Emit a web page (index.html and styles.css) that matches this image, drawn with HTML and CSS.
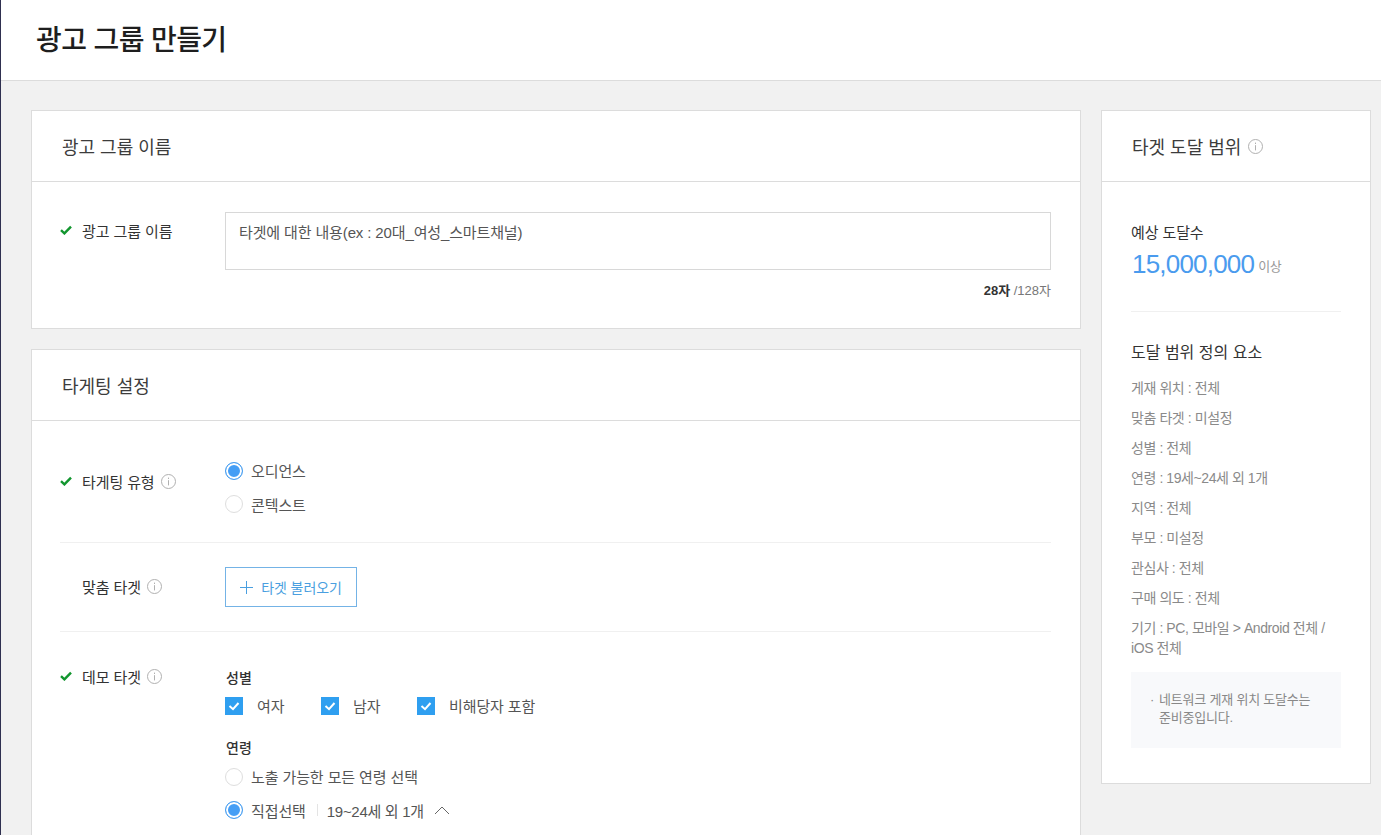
FILE: index.html
```html
<!DOCTYPE html>
<html lang="ko">
<head>
<meta charset="utf-8">
<title>광고 그룹 만들기</title>
<link rel="stylesheet" href="styles.css">
</head>
<body>
<svg class="defs" width="0" height="0">
  <symbol id="info" viewBox="0 0 15 15"><circle cx="7.5" cy="7.5" r="7" fill="none" stroke="#b0b0b0"/><path d="M7.5 3.6v1.4M7.5 6.2V11.4" stroke="#b0b0b0" fill="none"/></symbol>
  <symbol id="ok" viewBox="0 0 12 10"><path d="M1 5.2 4.4 8.4 11 1.6" fill="none" stroke="#12962f" stroke-width="2.4"/></symbol>
  <symbol id="tick" viewBox="0 0 18 18"><path d="M4.5 9 8 12.2 13.5 6" fill="none" stroke="#fff" stroke-width="2"/></symbol>
</svg>
<div class="app">
  <header class="topbar"><h1 class="page-title">광고 그룹 만들기</h1></header>
  <main class="layout">
    <div class="col-main">
      <section class="card">
        <h2 class="card-head">광고 그룹 이름</h2>
        <div class="name-body">
          <div class="row-label name-label"><svg class="ok"><use href="#ok"/></svg><span>광고 그룹 이름</span></div>
          <div class="name-field">
            <div class="textbox">타겟에 대한 내용(ex : 20대_여성_스마트채널)</div>
            <p class="counter"><b>28자</b> /128자</p>
          </div>
        </div>
      </section>
      <section class="card">
        <h2 class="card-head">타게팅 설정</h2>
        <div class="target-body">
          <div class="row row-type">
            <div class="row-label label-type"><svg class="ok"><use href="#ok"/></svg><span>타게팅 유형</span><svg class="info"><use href="#info"/></svg></div>
            <div class="stack">
              <label class="opt"><i class="radio on low"></i>오디언스</label>
              <label class="opt"><i class="radio"></i>콘텍스트</label>
            </div>
          </div>
          <div class="row row-custom">
            <div class="row-label no-ok"><span>맞춤 타겟</span><svg class="info"><use href="#info"/></svg></div>
            <button class="btn-load" type="button"><svg class="plus" viewBox="0 0 13 13"><path d="M6.5 0v13M0 6.5h13" stroke="#4a9fe0" fill="none"/></svg>타겟 불러오기</button>
          </div>
          <div class="row row-demo">
            <div class="row-label"><svg class="ok"><use href="#ok"/></svg><span>데모 타겟</span><svg class="info"><use href="#info"/></svg></div>
            <div class="demo">
              <h3 class="demo-title">성별</h3>
              <div class="checks">
                <label class="check c1"><i class="box"><svg viewBox="0 0 18 18"><use href="#tick"/></svg></i>여자</label>
                <label class="check c2"><i class="box"><svg viewBox="0 0 18 18"><use href="#tick"/></svg></i>남자</label>
                <label class="check"><i class="box"><svg viewBox="0 0 18 18"><use href="#tick"/></svg></i>비해당자 포함</label>
              </div>
              <h3 class="demo-title age">연령</h3>
              <label class="opt age-opt"><i class="radio low"></i>노출 가능한 모든 연령 선택</label>
              <div class="opt direct"><i class="radio on"></i>직접선택<span class="sep"></span><span class="range">19~24세 외 1개</span><svg class="chev" viewBox="0 0 16 9"><path d="M1 8 8 1l7 7" fill="none" stroke="#666"/></svg></div>
            </div>
          </div>
        </div>
      </section>
    </div>
    <aside class="col-side">
      <section class="card side">
        <h2 class="card-head">타겟 도달 범위<svg class="info head-info"><use href="#info"/></svg></h2>
        <div class="side-body">
          <h3 class="side-title">예상 도달수</h3>
          <p class="reach"><span class="reach-num">15,000,000</span><span class="reach-unit">이상</span></p>
          <hr class="side-rule">
          <h3 class="side-title wide">도달 범위 정의 요소</h3>
          <ul class="factors">
            <li>게재 위치 : 전체</li>
            <li>맞춤 타겟 : 미설정</li>
            <li>성별 : 전체</li>
            <li>연령 : 19세~24세 외 1개</li>
            <li>지역 : 전체</li>
            <li>부모 : 미설정</li>
            <li>관심사 : 전체</li>
            <li>구매 의도 : 전체</li>
            <li>기기 : PC, 모바일 &gt; Android 전체 / iOS 전체</li>
          </ul>
          <div class="notice"><span class="dot">·</span><span>네트워크 게재 위치 도달수는 준비중입니다.</span></div>
        </div>
      </section>
    </aside>
  </main>
</div>
</body>
</html>
```

FILE: styles.css
```css
* { box-sizing: border-box; }
html, body { margin: 0; height: 100%; overflow: hidden; }
body {
  font-family: "Liberation Sans", "Noto Sans CJK KR", sans-serif;
  font-size: 14px;
  color: #333;
  background: #f1f1f1;
}
.defs { position: absolute; }
.app { height: 835px; border-left: 1px solid #2f3050; overflow: hidden; }
.topbar {
  height: 81px;
  background: #fff;
  border-bottom: 1px solid #dcdcdc;
  padding-left: 35px;
  display: flex;
  align-items: center;
}
.page-title { margin: 0 0 4px; font-size: 28px; font-weight: 500; letter-spacing: -0.6px; color: #1e1e1e; }
.layout { display: flex; gap: 20px; padding: 29px 10px 0 30px; align-items: flex-start; }
.col-main { width: 1050px; display: flex; flex-direction: column; gap: 20px; }
.col-side { width: 270px; }
.card { background: #fff; border: 1px solid #dcdcdc; }
.card-head {
  height: 71px;
  margin: 0;
  padding-left: 30px;
  border-bottom: 1px solid #dcdcdc;
  font-size: 18px;
  font-weight: 400;
  letter-spacing: 0;
  color: #3c3c3c;
  display: flex;
  align-items: center;
}
.name-body { display: flex; padding: 30px 29px 22px 28px; height: 146px; }
.row-label { width: 165px; flex: none; display: flex; align-items: center; height: 20px; font-size: 15px; letter-spacing: -0.1px; color: #333; }
.name-label { margin-top: 8px; }
.ok { width: 12px; height: 10px; margin-right: 10px; flex: none; }
.info { width: 15px; height: 15px; margin-left: 6px; flex: none; }
.head-info { margin-left: 7px; }
.no-ok { padding-left: 22px; margin-bottom: 2px; }
.name-field { flex: 1; }
.textbox {
  height: 58px;
  border: 1px solid #d8d8d8;
  padding: 8px 13px;
  font-size: 15px;
  letter-spacing: -0.13px;
  color: #555;
}
.counter { margin: 10px 0 0; text-align: right; font-size: 13px; letter-spacing: 0; color: #777; }
.counter b { color: #333; }
.target-body { padding: 0 29px 0 28px; }
.row { display: flex; border-bottom: 1px solid #f0f0f0; }
.row:last-child { border-bottom: 0; }
.row-type { height: 122px; padding-top: 30px; }
.label-type { margin-top: 20px; height: 20px; }
.stack { display: flex; flex-direction: column; gap: 14px; margin-top: 9px; }
.opt { display: flex; align-items: center; height: 20px; font-size: 15px; color: #555; letter-spacing: -0.1px; }
.radio { width: 18px; height: 18px; border-radius: 50%; border: 1px solid #dedede; background: #fff; margin-right: 8px; flex: none; }
.radio.low { margin-top: 2px; }
.radio.on { border: 1px solid #4a9ff0; background: #459ef5; box-shadow: inset 0 0 0 2px #fff; }
.row-custom { height: 89px; align-items: center; }
.btn-load {
  width: 132px;
  height: 40px;
  border: 1px solid #74b3e6;
  background: #fff;
  color: #4a9fe0;
  font: inherit;
  font-size: 14px;
  letter-spacing: -0.1px;
  display: flex;
  align-items: center;
  justify-content: center;
  padding: 0;
}
.plus { width: 13px; height: 13px; margin-right: 8px; }
.row-demo { padding-top: 34px; height: 300px; }
.demo { flex: 1; }
.demo-title { margin: 0; font-size: 14px; font-weight: 500; line-height: 20px; color: #333; margin-top: 2px; padding-left: 1px; }
.checks { display: flex; margin-top: 7px; }
.check { display: flex; align-items: center; height: 20px; font-size: 15px; color: #555; letter-spacing: -0.1px; }
.c1 { width: 96px; }
.c2 { width: 96px; }
.box { width: 18px; height: 18px; background: #2f9ff0; margin: 2px 14px 0 0; flex: none; display: block; }
.box svg { display: block; width: 18px; height: 18px; }
.age { margin-top: 23px; }
.age-opt { margin-top: 8px; }
.direct { margin-top: 14px; }
.sep { width: 1px; height: 12px; background: #e4e4e4; margin: 0 9px 0 11px; }
.range { color: #555; letter-spacing: -0.3px; }
.chev { width: 16px; height: 9px; margin-left: 10px; }
.side-body { padding: 40px 29px 35px 29px; }
.side .card-head { padding-left: 30px; }
.side-title { margin: 0; font-size: 15px; font-weight: 400; line-height: 22px; letter-spacing: -0.1px; color: #333; }
.side-title.wide { font-size: 16px; letter-spacing: 0; }
.reach { margin: 4px 0 0; display: flex; align-items: center; padding-left: 1px; }
.reach-num { font-size: 26px; line-height: 32px; color: #4a9bee; letter-spacing: -0.8px; }
.reach-unit { font-size: 13px; color: #999; margin: 2px 0 0 4px; letter-spacing: -0.3px; }
.side-rule { border: 0; border-top: 1px solid #f0f0f0; margin: 31px 0 30px; }
.factors { list-style: none; margin: 14px 0 0; padding: 0; font-size: 14px; line-height: 20px; color: #8a8a8a; letter-spacing: -0.42px; }
.factors li { margin-bottom: 10px; }
.factors li:last-child { margin-bottom: 0; }
.notice {
  margin-top: 14px;
  background: #f8f9fb;
  padding: 19px 20px 21px 19px;
  display: flex;
  font-size: 13px;
  line-height: 18px;
  color: #888;
  letter-spacing: -0.2px;
}
.dot { width: 9px; flex: none; }
```
